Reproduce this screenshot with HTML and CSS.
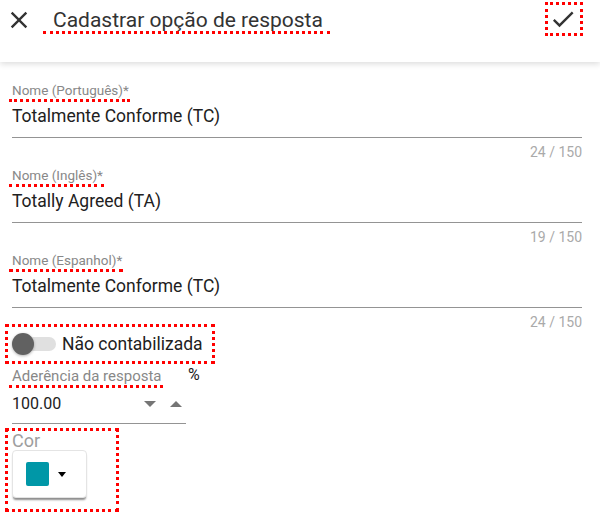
FILE: index.html
```html
<!DOCTYPE html>
<html lang="pt-BR">
  <head>
    <meta charset="UTF-8" />
    <meta name="viewport" content="width=device-width, initial-scale=1.0" />
    <title>Cadastrar opção de resposta</title>
    <link rel="stylesheet" href="styles.css">
  </head>
  <body>
    <header class="topbar">
      <button class="icon-btn close-btn" title="Fechar">
        <svg viewBox="0 0 24 24" width="28" height="28">
          <path d="M19 6.41L17.59 5 12 10.59 6.41 5 5 6.41 10.59 12 5 17.59 6.41 19 12 13.41 17.59 19 19 17.59 13.41 12z" />
        </svg>
      </button>
      <h1 class="title flag-line">Cadastrar opção de resposta</h1>
      <button class="icon-btn confirm-btn flag-box" title="Salvar">
        <svg viewBox="0 0 24 24" width="28" height="28">
          <path d="M9 16.17L4.83 12l-1.42 1.41L9 19 21 7l-1.41-1.41z" />
        </svg>
      </button>
    </header>

    <main class="form">
      <div class="field">
        <label class="field-label flag-line">Nome (Português)*</label>
        <div class="field-input">Totalmente Conforme (TC)</div>
        <div class="field-hint">24 / 150</div>
      </div>

      <div class="field">
        <label class="field-label flag-line">Nome (Inglês)*</label>
        <div class="field-input">Totally Agreed (TA)</div>
        <div class="field-hint">19 / 150</div>
      </div>

      <div class="field last">
        <label class="field-label flag-line">Nome (Espanhol)*</label>
        <div class="field-input">Totalmente Conforme (TC)</div>
        <div class="field-hint">24 / 150</div>
      </div>

      <div class="toggle-row flag-box">
        <span class="toggle">
          <span class="toggle-track"></span>
          <span class="toggle-thumb"></span>
        </span>
        <span class="toggle-label">Não contabilizada</span>
      </div>

      <div class="number-field">
        <div class="number-main">
          <label class="field-label number-label flag-line">Aderência da resposta</label>
          <div class="number-input">
            <span>100.00</span>
            <span class="spin">
              <span class="arrow-down"></span>
              <span class="arrow-up"></span>
            </span>
          </div>
        </div>
        <span class="suffix">%</span>
      </div>

      <div class="color-field flag-box">
        <div class="color-label">Cor</div>
        <button class="color-btn">
          <span class="swatch"></span>
          <span class="caret"></span>
        </button>
      </div>
    </main>
  </body>
</html>
```

FILE: styles.css
```css
body {
  margin: 0;
  font-family: Roboto, "Liberation Sans", sans-serif;
  background: #fff;
  color: #212121;
}
button {
  font-family: inherit;
  background: none;
  border: none;
  padding: 0;
  cursor: pointer;
}

/* annotation marks */
.flag-line {
  border-bottom: 3px dotted #f00;
}
.flag-box {
  border: 3px dotted #f00;
}

/* top bar */
.topbar {
  height: 62px;
  display: flex;
  align-items: flex-start;
  background: #fff;
  box-shadow: 0 2px 6px rgba(0, 0, 0, 0.14);
  position: relative;
  z-index: 1;
}
.icon-btn svg {
  display: block;
  fill: #333;
}
.close-btn {
  margin: 6px 0 0 5px;
}
.title {
  margin: 9px 0 0 10px;
  padding: 0 7px 0 10px;
  font-size: 21px;
  line-height: 22px;
  font-weight: 400;
  color: #333;
}
.confirm-btn {
  margin: 2px 17px 0 auto;
  padding: 0 3px 0 1px;
  height: 34px;
}

/* form */
.form {
  padding: 18px 18px 0 12px;
}
.field {
  margin-bottom: 5px;
}
.field.last {
  margin-bottom: -6px;
}
.field-label {
  display: inline-block;
  margin-left: -3px;
  padding: 0 1px 0 3px;
  font-size: 13.5px;
  line-height: 18px;
  color: #888;
}
.field-input {
  padding: 2px 0 9px;
  font-size: 17.5px;
  line-height: 24px;
  color: #212121;
  border-bottom: 1px solid #949494;
}
.field-hint {
  margin-top: 6px;
  text-align: right;
  font-size: 14px;
  line-height: 16px;
  color: #aaa;
}

/* toggle */
.toggle-row {
  display: inline-flex;
  align-items: center;
  height: 34px;
  margin-left: -7px;
  padding: 0 9px 0 4px;
}
.toggle {
  position: relative;
  width: 44px;
  height: 22px;
}
.toggle-track {
  position: absolute;
  left: 8px;
  top: 4px;
  width: 36px;
  height: 14px;
  border-radius: 7px;
  background: #e0e0e0;
}
.toggle-thumb {
  position: absolute;
  left: 0;
  top: 0;
  width: 22px;
  height: 22px;
  border-radius: 50%;
  background: #616161;
  box-shadow: 0 1px 3px rgba(0, 0, 0, 0.3);
}
.toggle-label {
  margin-left: 6px;
  font-size: 17.5px;
  color: #212121;
}

/* number */
.number-field {
  display: flex;
  align-items: flex-start;
  margin-top: 2px;
}
.number-main {
  width: 174px;
}
.number-label {
  font-size: 15px;
}
.number-input {
  display: flex;
  align-items: center;
  justify-content: space-between;
  padding: 6px 4px 9px 0;
  font-size: 16px;
  line-height: 20px;
  border-bottom: 1px solid #949494;
}
.spin {
  display: flex;
  gap: 14px;
}
.arrow-down,
.arrow-up {
  width: 0;
  height: 0;
  border-left: 6.5px solid transparent;
  border-right: 6.5px solid transparent;
}
.arrow-down {
  border-top: 6px solid #757575;
}
.arrow-up {
  border-bottom: 6px solid #757575;
}
.suffix {
  margin-left: 2px;
  font-size: 16px;
  line-height: 18px;
  color: #212121;
}

/* color */
.color-field {
  width: 104px;
  margin: 4px 0 0 -7px;
  padding: 0 0 11px 4px;
}
.color-label {
  font-size: 18px;
  line-height: 19px;
  color: #9e9e9e;
}
.color-btn {
  display: flex;
  align-items: center;
  width: 75px;
  height: 48px;
  padding: 0 0 0 13px;
  background: #fff;
  border: 1px solid #e4e4e4;
  border-radius: 4px;
  box-shadow: 0 3px 2px -1px rgba(0, 0, 0, 0.45);
}
.swatch {
  width: 23px;
  height: 24px;
  border-radius: 2px;
  background: #0097a7;
}
.caret {
  margin-left: 9px;
  width: 0;
  height: 0;
  border-left: 4.5px solid transparent;
  border-right: 4.5px solid transparent;
  border-top: 5px solid #000;
}
```
